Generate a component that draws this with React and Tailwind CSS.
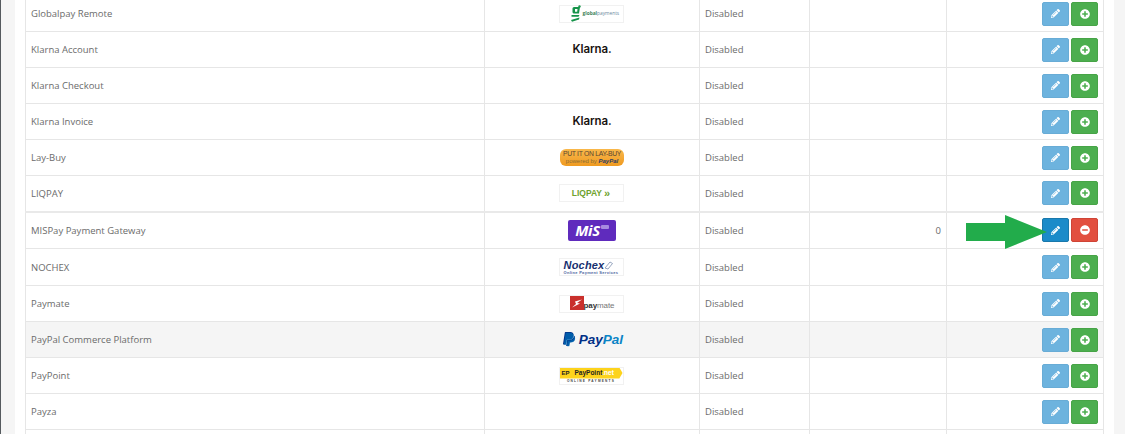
import React from 'react'
import { FaPencilAlt, FaPlusCircle, FaMinusCircle, FaPaypal } from 'react-icons/fa'

const GlobalLogo = () => (
  <div className="mx-auto flex h-[18px] w-[65px] items-center border border-[#f1f1f1] bg-white pl-[10px]">
    <svg width="12" height="17" viewBox="0 0 12 17">
      <circle cx="9.500" cy="1.500" r="1.200" fill="#1f9a50" />
      <path d="M2.500 3.500C2.500 2.500 3.500 2 4.500 2H10L9 8.500H4.500C3 8.500 2.500 7.800 2.500 7zM5 4v2.800H7.200L7.500 4zM1.500 10H9.500L8.500 11.800H1.500z" fill="#16934a" fillRule="evenodd" />
      <path d="M1 15 9.500 12.500 9 14.500 2 16.800z" fill="#16934a" />
    </svg>
    <span className="ml-[1px] text-[4.8px] leading-none font-bold text-[#3f7f5a]">global<span className="font-normal text-[#6b8aa0]">payments</span></span>
  </div>
)

const KlarnaLogo = () => (
  <div className="mx-auto w-[40px] translate-x-[1px] text-center font-['Inter',sans-serif] text-[11.5px] leading-[13px] font-semibold tracking-[-0.1px] text-[#17120f]">Klarna.</div>
)

const LayBuyLogo = () => (
  <div className="mx-auto flex h-[17px] w-[64px] translate-x-[1px] flex-col items-center justify-center rounded-[6px] bg-gradient-to-b from-[#f9b84a] to-[#ef9a1e] font-['Liberation_Sans',sans-serif] leading-none whitespace-nowrap">
    <span className="text-[6.8px] tracking-[-0.3px] text-[#5a4631]">PUT IT ON LAY-BUY</span>
    <span className="text-[6px] text-[#8a6a32]">powered by <b className="text-[#2b3a63] italic">PayPal</b></span>
  </div>
)

const LiqpayLogo = () => (
  <div className="mx-auto flex h-[18px] w-[65px] items-center justify-center border border-[#f1f1f1] bg-white font-['Liberation_Sans',sans-serif] text-[8.5px] font-bold text-[#6fa32e]">
    LIQPAY<span className="ml-[2px] text-[11px] leading-none font-bold">»</span>
  </div>
)

const MisLogo = () => (
  <div className="mx-auto flex h-[21px] w-[48px] translate-x-[1px] items-center justify-center rounded-[2px] bg-[#5f2bbd] font-['Open_Sans',sans-serif] text-white">
    <span className="text-[15px] leading-none font-bold italic tracking-[-0.4px]">MiS</span>
    <span className="mb-[6px] ml-[1px] h-[4px] w-[8px] rounded-[1px] bg-[#a78be0]" />
  </div>
)

const NochexLogo = () => (
  <div className="mx-auto flex h-[18px] w-[65px] flex-col justify-center border border-[#f1f1f1] bg-white pl-[4px] font-['Liberation_Sans',sans-serif] leading-none">
    <span className="flex items-center text-[11px] font-bold italic tracking-[0.2px] text-[#17306f]">
      Nochex
      <svg width="10" height="10" viewBox="0 0 10 10"><path d="M1 8 6 2 8.500 3.500 4 9z" fill="none" stroke="#7d8fb0" strokeWidth="0.8" /></svg>
    </span>
    <span className="text-[4px] font-bold tracking-[0.3px] text-[#4c66a0]">Online Payment Services</span>
  </div>
)

const PaymateLogo = () => (
  <div className="mx-auto flex h-[18px] w-[65px] items-end border border-[#f1f1f1] bg-white pb-[1px] pl-[10px] font-['Liberation_Sans',sans-serif] leading-none">
    <svg width="14" height="14" viewBox="0 0 14 14" className="mb-[0.5px]">
      <rect width="14" height="14" fill="#c9302c" />
      <path d="M5 5.500 12 3.500 7 7 10 7.500 2 11.500 6 8z" fill="#fff" />
    </svg>
    <span className="mb-[1px] text-[8px] font-bold tracking-[-0.1px] text-[#333]">pay<span className="font-normal text-[#777]">mate</span></span>
  </div>
)

const PaypalLogo = () => (
  <div className="mx-auto flex h-[17px] w-[62px] translate-x-[1px] items-center font-['Liberation_Sans',sans-serif] text-[13.5px] leading-none font-bold italic">
    <span className="relative mr-[4px] h-[17px] w-[14px]">
      <FaPaypal className="absolute left-0 top-0 text-[#003087]" size={16} />
      <FaPaypal className="absolute left-[1px] top-[1px] text-[#0070ba] opacity-70" size={15} />
    </span>
    <span className="text-[#003087]">Pay</span><span className="text-[#0a84c6]">Pal</span>
  </div>
)

const PaypointLogo = () => (
  <div className="mx-auto h-[18px] w-[65px] border border-[#f1f1f1] bg-white font-['Liberation_Sans',sans-serif] leading-none">
    <div className="flex h-[11px] w-[63px] items-center bg-[#fdd31c] [clip-path:polygon(0_0,95%_0,100%_50%,95%_100%,0_100%)]">
      <span className="w-[12px] text-center text-[6px] font-bold text-[#222]">EP</span>
      <span className="ml-[3px] text-[6.5px] font-bold text-[#222]">PayPoint<span className="text-white">.net</span></span>
    </div>
    <div className="mt-[1.5px] text-center text-[3.2px] font-bold tracking-[1.2px] text-[#444]">ONLINE PAYMENTS</div>
  </div>
)

const rows = [
  { name: 'Globalpay Remote', logo: <GlobalLogo />, h: 'h-[36px]' },
  { name: 'Klarna Account', logo: <KlarnaLogo />, h: 'h-[36px]' },
  { name: 'Klarna Checkout', logo: null, h: 'h-[36px]' },
  { name: 'Klarna Invoice', logo: <KlarnaLogo />, h: 'h-[36px]' },
  { name: 'Lay-Buy', logo: <LayBuyLogo />, h: 'h-[36px]' },
  { name: 'LIQPAY', logo: <LiqpayLogo />, h: 'h-[36px]' },
  { name: 'MISPay Payment Gateway', logo: <MisLogo />, h: 'h-[37px]', installed: true },
  { name: 'NOCHEX', logo: <NochexLogo />, h: 'h-[37px]' },
  { name: 'Paymate', logo: <PaymateLogo />, h: 'h-[36px]' },
  { name: 'PayPal Commerce Platform', logo: <PaypalLogo />, h: 'h-[36px]', shaded: true },
  { name: 'PayPoint', logo: <PaypointLogo />, h: 'h-[36px]' },
  { name: 'Payza', logo: null, h: 'h-[36px]' },
  { name: '', logo: null, h: 'h-[36px]', empty: true },
]

const cell = 'border border-[#e6e6e6] px-[5px] py-0 align-middle'
const textCell = 'border border-[#e6e6e6] px-[5px] pt-[2px] pb-0 align-middle'

function Actions({ installed }) {
  return (
    <div className="flex justify-end gap-[2px]">
      <button className={`flex h-[24px] w-[27px] items-center justify-center rounded-[2px] border text-white ${installed ? 'border-[#1978ab] bg-[#1b8bc9]' : 'border-[#68acd6] bg-[#6db3de]'}`}>
        <FaPencilAlt size={9} />
      </button>
      <button className={`flex h-[24px] w-[27px] items-center justify-center rounded-[2px] border text-white ${installed ? 'border-[#cf4436] bg-[#e24f3f]' : 'border-[#47a447] bg-[#4cae4f]'}`}>
        {installed ? <FaMinusCircle size={10} /> : <FaPlusCircle size={10} />}
      </button>
    </div>
  )
}

export default function App() {
  return (
    <div className="flex h-[434px] overflow-hidden bg-white font-['Open_Sans',sans-serif] text-[9.5px] text-[#6b6b6b]">
      <div className="w-px shrink-0 bg-[#555a5e]" />
      <div className="w-[14px] shrink-0 bg-[#f5f5f5]" />
      <div className="relative w-[1099px] shrink-0 px-[10px]">
        <table className="-mt-[5px] w-[1078px] table-fixed border-collapse">
          <colgroup>
            <col className="w-[459px]" />
            <col className="w-[215px]" />
            <col className="w-[110px]" />
            <col className="w-[137px]" />
            <col className="w-[157px]" />
          </colgroup>
          <tbody>
            {rows.map((r, i) => (
              <tr key={i} className={`${r.h} ${r.shaded ? 'bg-[#f5f5f5]' : ''} ${r.installed ? 'border-t-2 border-t-[#e9e9e9]' : ''}`}>
                <td className={textCell}>{r.name}</td>
                <td className={`${cell} pr-[7px]`}>{r.logo}</td>
                <td className={textCell}>{r.empty ? '' : 'Disabled'}</td>
                <td className={`${textCell} text-right`}>{r.installed ? '0' : ''}</td>
                <td className={cell}>{r.empty ? null : <Actions installed={r.installed} />}</td>
              </tr>
            ))}
          </tbody>
        </table>
        {/* green callout arrow over the MISPay row */}
        <svg className="absolute left-[951px] top-[215px]" width="82" height="34" viewBox="0 0 82 34">
          <path d="M0 8H39V0L81 17 39 34V26H0z" fill="#22ac4b" />
        </svg>
      </div>
      <div className="flex-1 bg-[#f5f5f5]" />
    </div>
  )
}
